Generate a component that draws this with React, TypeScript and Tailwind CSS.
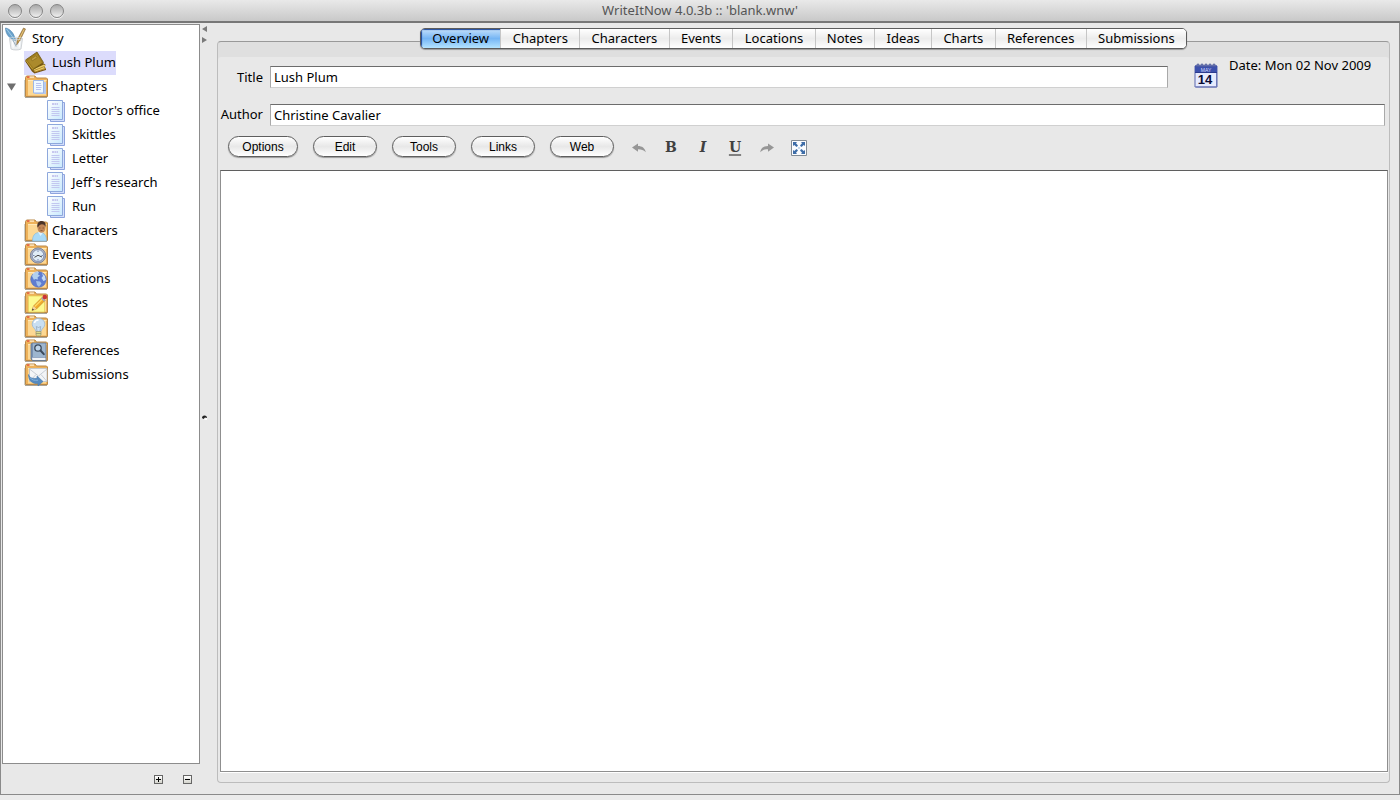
import { useState } from "react";
import type { ReactNode } from "react";

const TABS = [
  "Overview",
  "Chapters",
  "Characters",
  "Events",
  "Locations",
  "Notes",
  "Ideas",
  "Charts",
  "References",
  "Submissions",
];

const CHAPTERS = ["Doctor's office", "Skittles", "Letter", "Jeff's research", "Run"];

const FOLDERS = [
  { label: "Characters", art: <PersonArt /> },
  { label: "Events", art: <ClockArt /> },
  { label: "Locations", art: <GlobeArt /> },
  { label: "Notes", art: <NoteArt /> },
  { label: "Ideas", art: <BulbArt /> },
  { label: "References", art: <ReferenceArt /> },
  { label: "Submissions", art: <EnvelopeArt /> },
];

const MENUS = [
  { label: "Options", width: "w-[70px]" },
  { label: "Edit", width: "w-16" },
  { label: "Tools", width: "w-16" },
  { label: "Links", width: "w-16" },
  { label: "Web", width: "w-16" },
];

export default function App() {
  return (
    <div className="flex h-screen flex-col bg-[#ebebeb] font-['Noto_Sans','Open_Sans',sans-serif] text-[13px] text-black">
      <TitleBar />
      <div className="mb-[5px] flex min-h-0 flex-1 border-x border-b border-[#8a8a8a] bg-[#e8e8e8]">
        <Sidebar />
        <Divider />
        <Workspace />
        <div className="w-[9px] shrink-0" />
      </div>
    </div>
  );
}

function TitleBar() {
  return (
    <header className="flex h-[23px] shrink-0 items-center border-b-2 border-[#777777] bg-linear-to-b from-[#e9e9e9] to-[#c9c9c9] px-2">
      <div className="flex w-24 gap-[7px]">
        {["Close", "Minimize", "Zoom"].map((name) => (
          <button
            key={name}
            aria-label={name}
            className="size-[14px] rounded-full border border-[#858585] bg-linear-to-b from-[#a9a9a9] via-[#cbcbcb] to-[#f0f0f0] shadow-[0_1px_0_#f4f4f4]"
          />
        ))}
      </div>
      <h1 className="flex-1 text-center text-[#555555]">WriteItNow 4.0.3b :: 'blank.wnw'</h1>
      <div className="w-24" />
    </header>
  );
}

function Sidebar() {
  const [open, setOpen] = useState(true);

  return (
    <aside className="flex w-[199px] shrink-0 flex-col pt-px pl-px">
      <nav aria-label="Story" className="flex-1 border border-[#8c8c8c] bg-white pt-[2px]">
        <TreeRow label="Story" indent="pl-px" gap="gap-1" icon={<QuillsIcon />} />
        <TreeRow label="Lush Plum" indent="pl-[21px]" gap="gap-1" icon={<BookIcon />} selected />
        <div className="flex">
          <button
            aria-label={open ? "Collapse chapters" : "Expand chapters"}
            aria-expanded={open}
            onClick={() => setOpen(!open)}
            className="flex w-[21px] items-center pl-1"
          >
            <svg viewBox="0 0 9 8" className={open ? "h-2 w-[9px]" : "h-2 w-[9px] -rotate-90"} aria-hidden="true">
              <path d="M0 0.5h9L4.5 7.8z" fill="#6f6f6f" />
            </svg>
          </button>
          <TreeRow label="Chapters" indent="pl-0" gap="gap-1" icon={<FolderIcon><PageArt /></FolderIcon>} />
        </div>
        {open &&
          CHAPTERS.map((c) => (
            <TreeRow key={c} label={c} indent="pl-[41px]" gap="gap-1" icon={<PagesIcon />} />
          ))}
        {FOLDERS.map((f) => (
          <TreeRow
            key={f.label}
            label={f.label}
            indent="pl-[21px]"
            gap="gap-1"
            icon={<FolderIcon>{f.art}</FolderIcon>}
          />
        ))}
      </nav>
      <div className="flex h-[30px] items-center justify-end gap-5 pr-2">
        <button
          aria-label="Expand all"
          className="flex size-[9px] items-center justify-center border border-[#666666] bg-linear-to-b from-white to-[#d4d4cc]"
          onClick={() => setOpen(true)}
        >
          <svg viewBox="0 0 5 5" className="size-[5px]" aria-hidden="true">
            <path d="M2 0h1v2h2v1H3v2H2V3H0V2h2z" fill="#000" />
          </svg>
        </button>
        <button
          aria-label="Collapse all"
          className="flex size-[9px] items-center justify-center border border-[#666666] bg-linear-to-b from-white to-[#d4d4cc]"
          onClick={() => setOpen(false)}
        >
          <svg viewBox="0 0 5 5" className="size-[5px]" aria-hidden="true">
            <path d="M0 2h5v1H0z" fill="#000" />
          </svg>
        </button>
      </div>
    </aside>
  );
}

type TreeRowProps = {
  label: string;
  indent: string;
  gap: string;
  icon: ReactNode;
  selected?: boolean;
};

function TreeRow({ label, indent, gap, icon, selected }: TreeRowProps) {
  return (
    <div className={`flex h-6 ${indent}`}>
      <button className={`flex h-6 items-center whitespace-nowrap ${gap} ${selected ? "bg-[#dcdcfc]" : ""}`}>
        {icon}
        <span>{label}</span>
      </button>
    </div>
  );
}

function Divider() {
  return (
    <div className="flex w-[17px] shrink-0 flex-col pt-[3px] pl-[2px]">
      <svg viewBox="0 0 6 17" className="h-[17px] w-[6px]" aria-hidden="true">
        <path d="M5 0v6L0 3zM0 11v6l5-3z" fill="#7a7a7a" />
      </svg>
      <div className="flex flex-1 items-center pb-[2px]">
        <svg viewBox="0 0 5 5" className="size-[5px]" aria-hidden="true">
          <path d="M0 3a2.5 2.5 0 0 1 5 0L3 2.5 1.5 4z" fill="#222" />
          <path d="M2 4l3-1v2H3z" fill="#fff" />
        </svg>
      </div>
    </div>
  );
}

function Workspace() {
  const [tab, setTab] = useState("Overview");

  return (
    <main className="flex min-w-0 flex-1 flex-col pt-[5px] pb-[11px]">
      <div
        role="tablist"
        className="relative z-10 -mb-2 flex h-[21px] w-[767px] max-w-full self-center overflow-hidden rounded-[5px] border border-[#5c5c5c] bg-white shadow-[0_1px_1px_#999999]"
      >
        {TABS.map((t) => (
          <button
            key={t}
            role="tab"
            aria-selected={t === tab}
            onClick={() => setTab(t)}
            className={`flex flex-auto items-center justify-center border-r border-[#c6c6c6] last:border-r-0 ${
              t === tab
                ? "bg-linear-to-b from-[#c4e0fa] via-[#75b5f4] to-[#b4e4ff] shadow-[inset_1px_1px_1px_#1d479b]"
                : "bg-linear-to-b from-white via-[#ececec] to-white"
            }`}
          >
            {t}
          </button>
        ))}
      </div>

      <section className="flex min-h-0 flex-1 flex-col rounded-[4px] border border-[#bcbcbc] border-t-[#999999] bg-[#e8e8e8] pr-px pb-[10px] pl-[2px] shadow-[inset_0_15px_0_#dfdfdf]">
        <div className="mt-[15px] flex items-start">
          <label htmlFor="title" className="mt-[9px] w-[43px] text-right leading-[22px]">
            Title
          </label>
          <input
            id="title"
            defaultValue="Lush Plum"
            className="mt-[9px] ml-[7px] h-[22px] min-w-0 flex-1 border border-[#a9a9a9] border-t-[#6c6c6c] border-b-[#d0d0d0] bg-white px-[3px] outline-none"
          />
          <button aria-label="Pick date" className="mt-[5px] ml-[26px]">
            <CalendarIcon />
          </button>
          <p className="ml-[11px] w-[159px] leading-4 whitespace-nowrap">Date: Mon 02 Nov 2009</p>
        </div>

        <div className="mt-4 flex items-center pr-[3px]">
          <label htmlFor="author" className="w-[43px] text-right">
            Author
          </label>
          <input
            id="author"
            defaultValue="Christine Cavalier"
            className="ml-[7px] h-[22px] min-w-0 flex-1 border border-[#a9a9a9] border-t-[#6c6c6c] border-b-[#d0d0d0] bg-white px-[3px] outline-none"
          />
        </div>

        <div className="mt-[10px] flex h-[22px] items-start pl-2">
          <div className="flex gap-[15px]">
            {MENUS.map((m) => (
              <button
                key={m.label}
                className={`${m.width} h-[21px] rounded-full border border-[#5e5e5e] bg-linear-to-b from-white via-[#e8e8e8] to-white font-['Liberation_Sans',Arial,sans-serif] text-[12px] leading-[18px] shadow-[0_1px_1px_#999999]`}
              >
                {m.label}
              </button>
            ))}
          </div>
          <div className="ml-[9px] flex font-['DejaVu_Serif',serif] text-[14px] font-bold text-[#404040]">
            <button aria-label="Undo" className="flex h-[22px] w-8 items-center justify-center pt-[2px]">
              <ArrowIcon />
            </button>
            <button aria-label="Bold" className="h-[22px] w-8 leading-[22px]">
              B
            </button>
            <button aria-label="Italic" className="h-[22px] w-8 leading-[22px] italic">
              I
            </button>
            <button aria-label="Underline" className="h-[22px] w-8 leading-[22px] underline decoration-[#808080] decoration-2 underline-offset-2">
              U
            </button>
            <button aria-label="Redo" className="flex h-[22px] w-8 items-center justify-center pt-[2px]">
              <ArrowIcon flipped />
            </button>
            <button aria-label="Full screen" className="flex h-[22px] w-8 items-center justify-center pt-[2px]">
              <ExpandIcon />
            </button>
          </div>
        </div>

        <textarea
          aria-label="Overview text"
          className="mt-3 min-h-0 flex-1 resize-none border border-[#8f8f8f] border-t-[#5f5f5f] bg-white p-1 shadow-[0_1px_0_#ffffff] outline-none"
        />
      </section>
    </main>
  );
}

function FolderIcon({ children }: { children: ReactNode }) {
  return (
    <svg viewBox="0 0 24 24" className="size-6 shrink-0" aria-hidden="true">
      <path d="M0 5h2v17H0z" fill="#ccd0cc" />
      <path d="M1 22h22v1H1z" fill="#a9a498" />
      <path d="M1.5 21.500V2.500l1-1.500h8.500l1.500 2h10l1 1v17.500z" fill="#eeb25a" stroke="#b98849" />
      <path d="M4 20.500V6h18v14.500z" fill="#fcd894" />
      <path d="M4 5.500h18.500" stroke="#ffe9b8" />
      <path d="M3 1.500h7v1.200H3z" fill="#fff0d4" />
      <path d="M3 1.300h2.500v1.500H3z" fill="#e2512c" />
      {children}
    </svg>
  );
}

function PageArt() {
  return (
    <g>
      <path d="M11 7h11v12H11z" fill="#b6c9ee" />
      <path d="M9.5 5.500h10v12.500h-10z" fill="#eef8ff" stroke="#9db7e6" />
      <path d="M12 8.500h5M12 10.500h5.500M12 12.500h5.500M12 14.500h5" stroke="#b9c2ee" />
    </g>
  );
}

function PersonArt() {
  return (
    <g>
      <path d="M8.5 22c0-5 2-8.500 7-8.500 5 0 7 3 7 8.500z" fill="#a8daf7" stroke="#7db4da" strokeWidth=".6" />
      <path d="M14 13l2.500 4 3-4z" fill="#dff3ff" />
      <ellipse cx="17.500" cy="8.500" rx="4" ry="5.300" fill="#c18758" />
      <path d="M13.500 8.500C12.500 4 15 1.800 18 2c3.200.3 4.200 3 3.500 6-.8-2.300-2.300-2.800-4.300-2.600-1.800.1-2 1.800-3.700 3.100z" fill="#4b3429" />
      <path d="M15 9h1.500M18.500 9H20M16.500 11.500h2" stroke="#79482b" strokeWidth=".7" />
    </g>
  );
}

function ClockArt() {
  return (
    <g>
      <circle cx="14" cy="12.500" r="7.600" fill="#b3b8c2" stroke="#76809a" />
      <circle cx="14" cy="12.500" r="5.900" fill="#e0edf6" stroke="#6c7ba3" strokeWidth=".8" />
      <path d="M10.500 14.300l3.500-2 4 1.700" fill="none" stroke="#444" />
      <path d="M14 7.500V9M14 16v1.500M9 12.500h1.500M17.500 12.500H19" stroke="#60719c" strokeWidth=".8" />
    </g>
  );
}

function GlobeArt() {
  return (
    <g>
      <circle cx="14.500" cy="12.500" r="7.800" fill="#5f7dd0" stroke="#5069b6" strokeWidth=".6" />
      <path d="M8 9c1-3 4-4.500 7-4l-1 2.500 2 1-2.500 2 .5 2-3-.5-1 1z" fill="#b2d0ef" />
      <path d="M12 14l4 .5 1.500 2L15 20l-2-2z" fill="#a1c0ea" />
      <path d="M18 6l3 3 .8 4-2.300 1-2-3L19 9z" fill="#c5dcf5" />
      <path d="M9 7c1.500-1.800 3.500-2.400 5-2.400" stroke="#fff" strokeWidth=".8" fill="none" opacity=".7" />
    </g>
  );
}

function NoteArt() {
  return (
    <g>
      <path d="M4.500 5h16v16h-16z" fill="#fdf98f" stroke="#e0cd55" strokeWidth=".7" />
      <path d="M8 19.500l1.500-4.500L18 6.500l3 3-8.500 8.500z" fill="#f0ab2d" stroke="#bf7b26" strokeWidth=".6" />
      <path d="M10.800 15.500L19 7.500" stroke="#ffdb68" strokeWidth="1.200" />
      <path d="M8 19.500l1.500-4.500 3 3z" fill="#f2d4a2" />
      <path d="M8 19.500l.6-2 1.400 1.300z" fill="#2b2b2b" />
      <path d="M17 7.500l1.500-1.500 3 3-1.500 1.500z" fill="#a7a7ad" />
      <circle cx="20.800" cy="6" r="2.300" fill="#cb3337" />
    </g>
  );
}

function BulbArt() {
  return (
    <g>
      <path d="M14.500 3.500c-4 0-6.300 2.700-6.300 5.700 0 3.300 3.300 4.300 3.800 7.300h5c.5-3 3.800-4 3.800-7.300 0-3-2.300-5.700-6.300-5.700z" fill="#c9dff2" stroke="#9bb8d6" strokeWidth=".8" />
      <path d="M10.500 8c.3-1.800 2-3 4-3" stroke="#fff" strokeWidth="1.500" fill="none" />
      <path d="M13 16l-.7-4.500 2.200 1 2.200-1L16 16" fill="none" stroke="#8fa4b8" strokeWidth=".7" />
      <path d="M12 16.500h5v3.500l-1.500 1h-2L12 20z" fill="#dedc88" stroke="#93947a" strokeWidth=".7" />
      <path d="M12 18.500h5" stroke="#898a65" strokeWidth=".7" />
    </g>
  );
}

function ReferenceArt() {
  return (
    <g>
      <path d="M7 5l1.500-1H22v17.500H8.500L7 20z" fill="#7891b3" stroke="#5f7593" strokeWidth=".8" />
      <path d="M9 4.500h12.500V18H9z" fill="#9db5ce" />
      <path d="M8 18.800h13.500V21h-13z" fill="#f1f3f6" />
      <circle cx="14" cy="9" r="3.200" fill="#bdd3e8" stroke="#3c4a5c" strokeWidth="1.300" />
      <path d="M16.500 11.500l3.300 3.700" stroke="#3c4a5c" strokeWidth="2" strokeLinecap="round" />
    </g>
  );
}

function EnvelopeArt() {
  return (
    <g>
      <path d="M5.500 5.500H23v13H5.500z" fill="#f3f5f7" stroke="#b7bfc8" strokeWidth=".8" />
      <path d="M5.500 6l9 7L23 6M5.500 18.500l6.500-7M23 18.500l-6-7" fill="none" stroke="#bcc3cc" strokeWidth=".8" />
      <path d="M4.500 11.500c1 3.500 4 4.300 8.500 3.800V13l6 5.500-5 4.500v-2.500C8.500 21 4.500 18 4.500 11.500z" fill="#558ac0" stroke="#4679ad" strokeWidth=".6" />
      <path d="M6 14.500c1.500 2.500 4.500 3.200 8 2.700" stroke="#85b4dd" fill="none" />
    </g>
  );
}

function PagesIcon() {
  return (
    <svg viewBox="0 0 24 24" className="size-6 shrink-0" aria-hidden="true">
      <defs>
        <linearGradient id="page" x1="0" y1="0" x2="1" y2="1">
          <stop offset="0" stopColor="#ffffff" />
          <stop offset="1" stopColor="#c9e9fd" />
        </linearGradient>
      </defs>
      <path d="M6.500 3.500h14v19h-14z" fill="#d3dffb" stroke="#8ea4de" />
      <path d="M3.500 1.500h15v19h-15z" fill="url(#page)" stroke="#8ea8dc" />
      <path d="M8 5h6" stroke="#bbb8ea" strokeWidth="1.500" strokeDasharray="2 .5" />
      <path d="M7.500 8.500h8M7.500 10.500h8M7.500 12.500h8M7.500 14.500h8M7.500 16.500h8" stroke="#c2c7f0" />
    </svg>
  );
}

function BookIcon() {
  return (
    <svg viewBox="0 0 24 24" className="size-6 shrink-0" aria-hidden="true">
      <path d="M1 10l7 10.500 2.500 2L22 19v-2l-1.500-.7 1-2.500-2-1.500z" fill="#765413" />
      <path d="M9 18.500l11-5 1.500 1.200-1.500 1.800 2 1.200-11 3.300z" fill="#ecd06e" />
      <path d="M10 19.500l10.500-4M11 21l10-3.500" stroke="#a97c20" strokeWidth=".8" />
      <path d="M1.500 9L13 1l6.500 10.500L8.500 19z" fill="#9c7a1d" stroke="#6f5914" strokeWidth=".8" />
      <path d="M3.500 9.500L12.700 3 18 11.800 9.500 17z" fill="#ab8a2c" />
      <path d="M7 8l5-3.300 1.200 2-5 3.200z" fill="#bf9f44" stroke="#846819" strokeWidth=".6" />
      <path d="M2 9.500l6.800 9" stroke="#d0ac43" strokeWidth=".8" />
    </svg>
  );
}

function QuillsIcon() {
  return (
    <svg viewBox="0 0 24 24" className="size-6 shrink-0" aria-hidden="true">
      <path d="M5.500 11.500h13L17 22c-2 1.300-8 1.300-10 0z" fill="#edf0f2" stroke="#c5c9cd" strokeWidth=".8" />
      <path d="M3 2l9 17" stroke="#7b94a8" strokeWidth=".8" />
      <path d="M1.500 1C6 2 10 5.500 11.500 13.500 6 12 1.500 7.500 1.500 1z" fill="#6aa3cd" stroke="#4a7fab" strokeWidth=".6" />
      <path d="M2.500 2l8 10.500" stroke="#b8dbef" strokeWidth=".7" />
      <path d="M19.500 1L21.500 2 16 13.500l-3.500 4.500.8-5.500z" fill="#bd9346" stroke="#86683a" strokeWidth=".6" />
      <path d="M20 2.500l-5.500 11" stroke="#ebcf8a" strokeWidth=".8" />
      <ellipse cx="12" cy="11.500" rx="6.500" ry="1.200" fill="none" stroke="#d0d5d9" strokeWidth=".8" />
      <path d="M8.500 14.500l.7 6M15.800 14.500l-.6 6" stroke="#fff" strokeWidth="1.200" />
      <path d="M12 14v6" stroke="#b3bec7" strokeWidth=".8" />
    </svg>
  );
}

function CalendarIcon() {
  return (
    <svg viewBox="0 0 24 26" className="block h-[26px] w-6" aria-hidden="true">
      <path d="M1 4h22v21H1z" fill="#e6eafd" stroke="#5a66ad" />
      <path d="M1 3.500h22v7H1z" fill="#3c50ac" />
      <path d="M1 10.500h22" stroke="#2b3b8e" />
      <path d="M22.500 11v14H2" stroke="#6c78b8" fill="none" />
      <path
        d="M3 5V3a1 1 0 0 1 2 0v2M7 5V3a1 1 0 0 1 2 0v2M11 5V3a1 1 0 0 1 2 0v2M15 5V3a1 1 0 0 1 2 0v2M19 5V3a1 1 0 0 1 2 0v2"
        fill="none"
        stroke="#56629e"
        strokeWidth="1.100"
      />
      <text x="12" y="9.500" textAnchor="middle" fontSize="5" fontFamily="Liberation Sans" fill="#d5dcff">
        MAY
      </text>
      <text x="11" y="21.500" textAnchor="middle" fontSize="13" fontWeight="bold" fontFamily="Liberation Sans" fill="#090b35">
        14
      </text>
    </svg>
  );
}

function ArrowIcon({ flipped }: { flipped?: boolean }) {
  return (
    <svg viewBox="0 0 14 10" className={flipped ? "h-[10px] w-[14px] -scale-x-100" : "h-[10px] w-[14px]"} aria-hidden="true">
      <path d="M0 4.500L6 .5v2.500c4 0 7 2 7.800 6.200C11.500 7 9.500 6.200 6 6.200v2.500z" fill="#969696" />
    </svg>
  );
}

function ExpandIcon() {
  return (
    <svg viewBox="0 0 16 16" className="size-4" aria-hidden="true">
      <path d="M.5.5h15v15H.5z" fill="#fbfcfe" stroke="#828b94" />
      <path
        d="M2 2h4L5 3.300 7 5.500 5.500 7 3.300 5 2 6zM14 2v4l-1.300-1-2.200 2L9 5.500l2-2.200L10 2zM2 14v-4l1.300 1 2.200-2L7 10.500l-2 2.200L6 14zM14 14h-4l1-1.300-2-2.200L10.500 9l2.200 2 1.300-1z"
        fill="#3e6da8"
      />
      <path d="M6.500 6.500l3 3M9.500 6.500l-3 3" stroke="#b9d0ea" strokeWidth=".8" />
    </svg>
  );
}
